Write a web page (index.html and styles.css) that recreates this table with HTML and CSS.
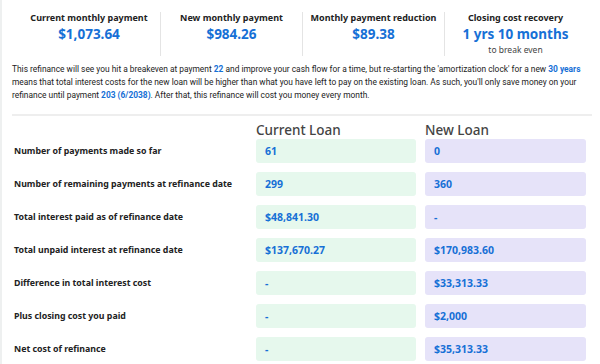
FILE: index.html
```html
<!DOCTYPE html>
<html lang="en">
<head>
  <meta charset="UTF-8" />
  <meta name="viewport" content="width=device-width, initial-scale=1.0"/>
  <title>Refinance Breakeven</title>
  <link rel="stylesheet" href="styles.css">
</head>
<body>
  <div class="stats">
    <div class="stat">
      <div class="stat-label">Current monthly payment</div>
      <div class="stat-value">$1,073.64</div>
    </div>
    <div class="stat">
      <div class="stat-label">New monthly payment</div>
      <div class="stat-value">$984.26</div>
    </div>
    <div class="stat">
      <div class="stat-label">Monthly payment reduction</div>
      <div class="stat-value">$89.38</div>
    </div>
    <div class="stat">
      <div class="stat-label">Closing cost recovery</div>
      <div class="stat-value">1 yrs 10 months</div>
      <div class="stat-note">to break even</div>
    </div>
  </div>

  <p class="summary">This refinance will see you hit a breakeven at payment <b>22</b> and improve your cash flow for a time, but re-starting the 'amortization clock' for a new <b>30 years</b> means that total interest costs for the new loan will be higher than what you have left to pay on the existing loan. As such, you'll only save money on your refinance until payment <b>203 (6/2038)</b>. After that, this refinance will cost you money every month.</p>

  <div class="compare">
    <div></div>
    <div class="col-title">Current Loan</div>
    <div class="col-title">New Loan</div>

    <div class="row-label">Number of payments made so far</div>
    <div class="cell current">61</div>
    <div class="cell new">0</div>

    <div class="row-label">Number of remaining payments at refinance date</div>
    <div class="cell current">299</div>
    <div class="cell new">360</div>

    <div class="row-label">Total interest paid as of refinance date</div>
    <div class="cell current">$48,841.30</div>
    <div class="cell new">-</div>

    <div class="row-label">Total unpaid interest at refinance date</div>
    <div class="cell current">$137,670.27</div>
    <div class="cell new">$170,983.60</div>

    <div class="row-label">Difference in total interest cost</div>
    <div class="cell current">-</div>
    <div class="cell new">$33,313.33</div>

    <div class="row-label">Plus closing cost you paid</div>
    <div class="cell current">-</div>
    <div class="cell new">$2,000</div>

    <div class="row-label">Net cost of refinance</div>
    <div class="cell current">-</div>
    <div class="cell new">$35,313.33</div>
  </div>
</body>
</html>
```

FILE: styles.css
```css
body {
  margin: 0;
  font-family: "Noto Sans", Arial, sans-serif;
  color: #222;
  background: #fff;
  border-left: 2px solid #eef0f0;
  min-height: 364px;
  box-sizing: border-box;
}
.stats {
  display: grid;
  grid-template-columns: repeat(4, 142px);
  margin: 12px 0 0 16px;
}
.stat {
  text-align: center;
  height: 44px;
  border-left: 1px solid #e4e4e4;
}
.stat:first-child { border-left: none; }
.stat-label {
  font-size: 9px;
  font-weight: 700;
  line-height: 12px;
}
.stat-value {
  font-size: 13.5px;
  font-weight: 700;
  color: #1670d6;
  line-height: 20px;
}
.stat-note {
  font-size: 8.5px;
  color: #444;
  line-height: 12px;
}
.summary {
  margin: 7px 8px 0 10px;
  padding-bottom: 12px;
  border-bottom: 2px solid #eeeeee;
  font-family: Roboto, "Noto Sans", sans-serif;
  font-size: 8.4px;
  line-height: 13px;
  color: #222;
}
.summary b { color: #1670d6; }
.compare {
  display: grid;
  grid-template-columns: 233px 160px 161px;
  column-gap: 9px;
  row-gap: 9px;
  padding: 6px 0 0 12px;
  align-items: center;
}
.col-title {
  font-size: 13.5px;
  font-weight: 500;
  color: #444;
  line-height: 16px;
  margin-bottom: -8px;
}
.row-label {
  font-size: 8.8px;
  font-weight: 700;
}
.cell {
  height: 24px;
  border-radius: 3px;
  padding-left: 9px;
  font-size: 10.5px;
  font-weight: 700;
  color: #1670d6;
  display: flex;
  align-items: center;
}
.current { background: #e6f8ed; }
.new { background: #e6e3f9; }
```
